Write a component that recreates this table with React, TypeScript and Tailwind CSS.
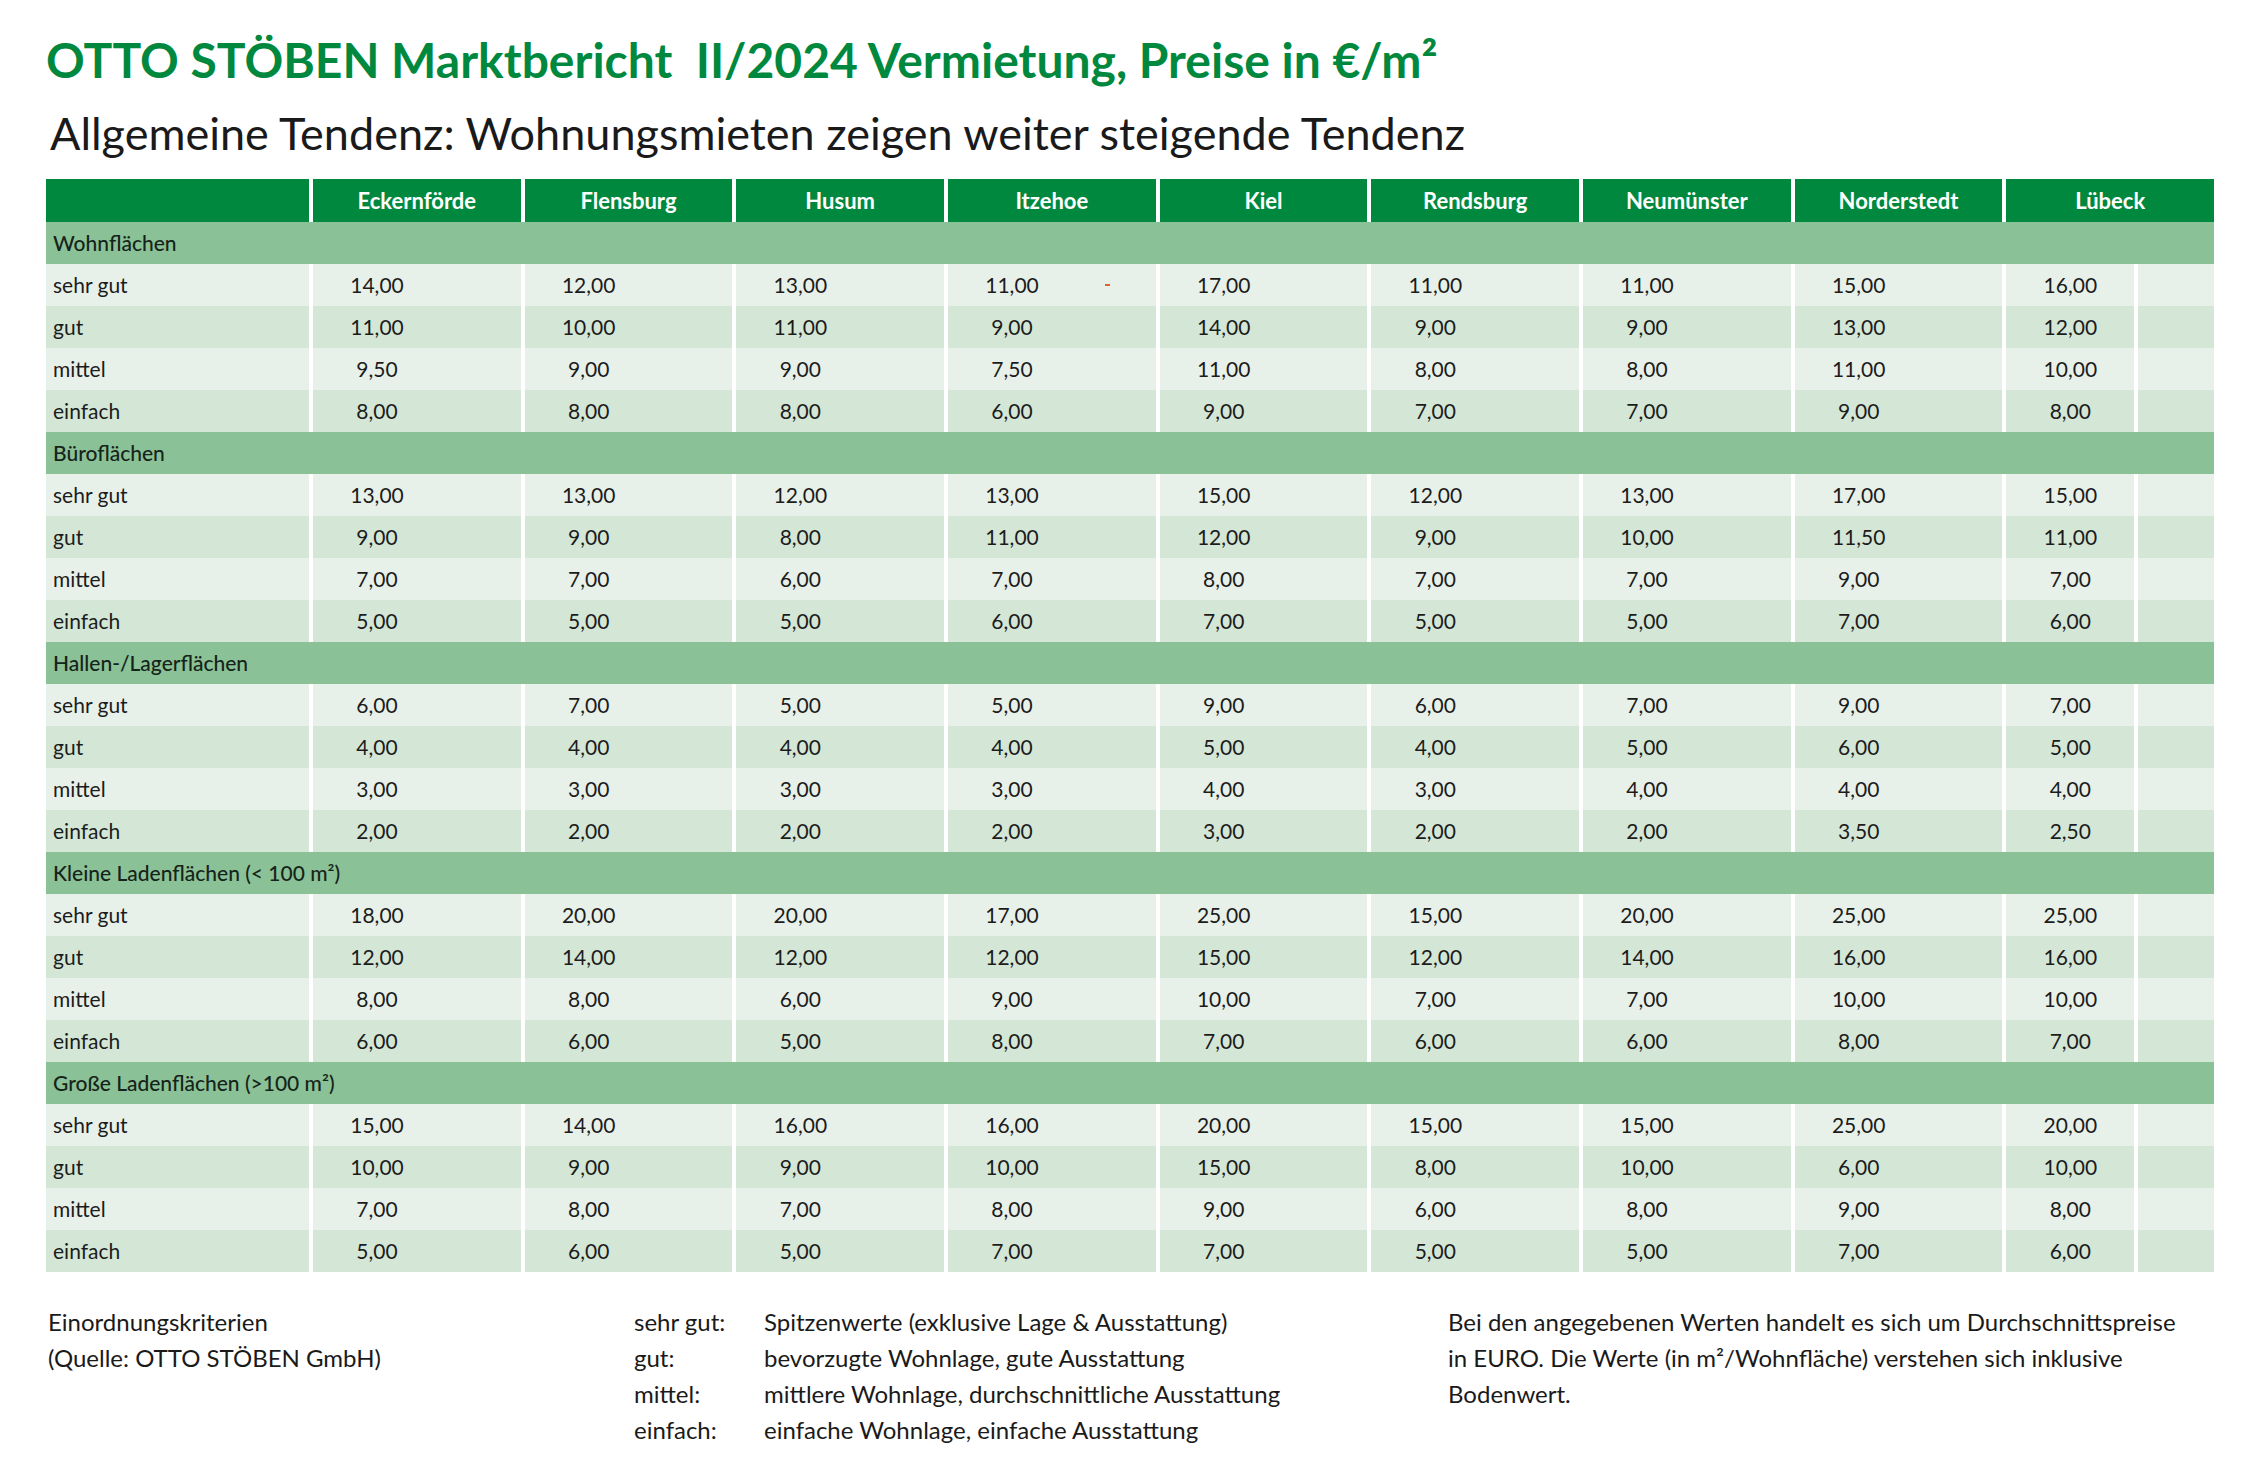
const cities = [
  "Eckernförde",
  "Flensburg",
  "Husum",
  "Itzehoe",
  "Kiel",
  "Rendsburg",
  "Neumünster",
  "Norderstedt",
  "Lübeck",
];

const grades = ["sehr gut", "gut", "mittel", "einfach"];

const sections = [
  {
    title: "Wohnflächen",
    rows: [
      ["14,00", "12,00", "13,00", "11,00", "17,00", "11,00", "11,00", "15,00", "16,00"],
      ["11,00", "10,00", "11,00", "9,00", "14,00", "9,00", "9,00", "13,00", "12,00"],
      ["9,50", "9,00", "9,00", "7,50", "11,00", "8,00", "8,00", "11,00", "10,00"],
      ["8,00", "8,00", "8,00", "6,00", "9,00", "7,00", "7,00", "9,00", "8,00"],
    ],
  },
  {
    title: "Büroflächen",
    rows: [
      ["13,00", "13,00", "12,00", "13,00", "15,00", "12,00", "13,00", "17,00", "15,00"],
      ["9,00", "9,00", "8,00", "11,00", "12,00", "9,00", "10,00", "11,50", "11,00"],
      ["7,00", "7,00", "6,00", "7,00", "8,00", "7,00", "7,00", "9,00", "7,00"],
      ["5,00", "5,00", "5,00", "6,00", "7,00", "5,00", "5,00", "7,00", "6,00"],
    ],
  },
  {
    title: "Hallen-/Lagerflächen",
    rows: [
      ["6,00", "7,00", "5,00", "5,00", "9,00", "6,00", "7,00", "9,00", "7,00"],
      ["4,00", "4,00", "4,00", "4,00", "5,00", "4,00", "5,00", "6,00", "5,00"],
      ["3,00", "3,00", "3,00", "3,00", "4,00", "3,00", "4,00", "4,00", "4,00"],
      ["2,00", "2,00", "2,00", "2,00", "3,00", "2,00", "2,00", "3,50", "2,50"],
    ],
  },
  {
    title: "Kleine Ladenflächen (< 100 m²)",
    rows: [
      ["18,00", "20,00", "20,00", "17,00", "25,00", "15,00", "20,00", "25,00", "25,00"],
      ["12,00", "14,00", "12,00", "12,00", "15,00", "12,00", "14,00", "16,00", "16,00"],
      ["8,00", "8,00", "6,00", "9,00", "10,00", "7,00", "7,00", "10,00", "10,00"],
      ["6,00", "6,00", "5,00", "8,00", "7,00", "6,00", "6,00", "8,00", "7,00"],
    ],
  },
  {
    title: "Große Ladenflächen (>100 m²)",
    rows: [
      ["15,00", "14,00", "16,00", "16,00", "20,00", "15,00", "15,00", "25,00", "20,00"],
      ["10,00", "9,00", "9,00", "10,00", "15,00", "8,00", "10,00", "6,00", "10,00"],
      ["7,00", "8,00", "7,00", "8,00", "9,00", "6,00", "8,00", "9,00", "8,00"],
      ["5,00", "6,00", "5,00", "7,00", "7,00", "5,00", "5,00", "7,00", "6,00"],
    ],
  },
];

const legend = [
  ["sehr gut:", "Spitzenwerte (exklusive Lage & Ausstattung)"],
  ["gut:", "bevorzugte Wohnlage, gute Ausstattung"],
  ["mittel:", "mittlere Wohnlage, durchschnittliche Ausstattung"],
  ["einfach:", "einfache Wohnlage, einfache Ausstattung"],
];

const font = { fontFamily: "Lato, 'Noto Sans', sans-serif" };

function DataRow({ label, values, shade, mark }: { label: string; values: string[]; shade: string; mark: boolean }) {
  return (
    <div className="grid h-[42px] grid-cols-[263px_repeat(9,minmax(0,1fr))] gap-x-[4px] bg-white">
      <div className={`flex items-center pl-[7px] ${shade}`}>{label}</div>
      {values.map((v, i) =>
        i === 8 ? (
          <div key={i} className="flex gap-x-[4px] bg-white">
            <div className={`flex w-[128px] items-center justify-center ${shade}`}>{v}</div>
            <div className={`flex-1 ${shade}`} />
          </div>
        ) : (
          <div key={i} className={`flex items-center ${shade}`}>
            <div className="w-[128px] text-center">{v}</div>
            {mark && i === 3 && <span className="ml-[29px] h-[2px] w-[5px] bg-[#e0602e]" />}
          </div>
        )
      )}
    </div>
  );
}

export default function App() {
  return (
    <div className="min-h-screen w-[2260px] bg-white pl-[46px] pt-[32px] text-[#1c1c1c]" style={font}>
      <h1 className="whitespace-nowrap text-[48px] font-bold leading-[56px] text-[#00893e]">
        OTTO STÖBEN Marktbericht&nbsp; II/2024 Vermietung, Preise in €/m²
      </h1>
      <h2 className="ml-[4px] mt-[19px] whitespace-nowrap text-[45px] font-normal leading-[52px] text-[#1a1a1a]">
        Allgemeine Tendenz: Wohnungsmieten zeigen weiter steigende Tendenz
      </h2>

      <div className="mt-[20px] w-[2168px] text-[21px]">
        <div className="grid h-[43px] grid-cols-[263px_repeat(9,minmax(0,1fr))] gap-x-[4px] bg-white">
          <div className="bg-[#00893e]" />
          {cities.map((c) => (
            <div key={c} className="flex items-center justify-center bg-[#00893e] text-[22px] font-bold text-white">
              {c}
            </div>
          ))}
        </div>

        {sections.map((s, si) => (
          <div key={s.title}>
            <div className="flex h-[42px] items-center bg-[#8bc196] pl-[7px] font-medium text-[#15241a]">{s.title}</div>
            {s.rows.map((r, ri) => (
              <DataRow
                key={ri}
                label={grades[ri]}
                values={r}
                shade={ri % 2 === 0 ? "bg-[#e8f1e9]" : "bg-[#d4e7d7]"}
                mark={si === 0 && ri === 0}
              />
            ))}
          </div>
        ))}
      </div>

      <div className="mt-[32px] grid grid-cols-[588px_814px_1fr] text-[24px] leading-[36px] text-[#1a1a1a]">
        <div className="pl-[2px]">
          <div>Einordnungskriterien</div>
          <div>(Quelle: OTTO STÖBEN GmbH)</div>
        </div>
        <div className="grid grid-cols-[130px_1fr]">
          {legend.map(([k, v]) => (
            <div key={k} className="contents">
              <div>{k}</div>
              <div>{v}</div>
            </div>
          ))}
        </div>
        <div>
          Bei den angegebenen Werten handelt es sich um Durchschnittspreise
          <br />
          in EURO. Die Werte (in m²/Wohnfläche) verstehen sich inklusive
          <br />
          Bodenwert.
        </div>
      </div>
    </div>
  );
}
